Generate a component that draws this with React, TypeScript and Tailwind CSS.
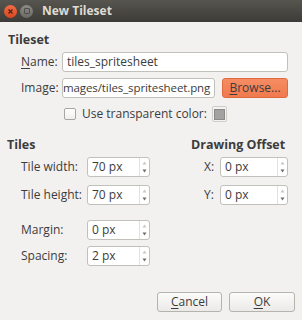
import React from "react";

const font = { fontFamily: '"Open Sans", "DejaVu Sans", sans-serif' };

function Spinner() {
  return (
    <div className="flex w-[10px] flex-col items-center justify-between border-l border-[#e3e1dd] py-[3px]">
      <svg width="5" height="4" viewBox="0 0 5 4">
        <path d="M2.5 0.5 L4.5 3.5 L0.5 3.5 Z" fill="#c9c7c2" />
      </svg>
      <svg width="5" height="4" viewBox="0 0 5 4">
        <path d="M0.5 0.5 L4.5 0.5 L2.5 3.5 Z" fill="#6e6c68" />
      </svg>
    </div>
  );
}

function SpinBox({ value, width }: { value: string; width: string }) {
  return (
    <div className={`flex h-[20px] ${width} rounded-[3px] border border-[#c2c0bb] bg-white`}>
      <div className="flex flex-1 items-center pl-[4px] text-[12px] text-[#3c3c3c]">{value}</div>
      <Spinner />
    </div>
  );
}

function Button({ children, className = "" }: { children: React.ReactNode; className?: string }) {
  return (
    <div
      className={`flex h-[20px] items-center justify-center rounded-[3px] border border-[#b5b3ae] bg-gradient-to-b from-[#fbfbfa] to-[#ebeae8] text-[12px] text-[#3c3c3c] ${className}`}
    >
      {children}
    </div>
  );
}

export default function App() {
  return (
    <div className="flex h-[320px] w-[302px] flex-col overflow-hidden bg-[#f2f1f0] text-[#3c3c3c]" style={font}>
      {/* Title bar */}
      <div className="flex h-[22px] items-center bg-gradient-to-b from-[#56554f] to-[#3c3b37]">
        <div className="ml-[4px] flex h-[13px] w-[13px] items-center justify-center rounded-full bg-gradient-to-b from-[#f26b45] to-[#d8471f]">
          <svg width="7" height="7" viewBox="0 0 7 7">
            <path d="M1.5 1.5 L5.5 5.5 M5.5 1.5 L1.5 5.5" stroke="#4a2315" strokeWidth="1.3" />
          </svg>
        </div>
        <div className="ml-[3px] flex h-[13px] w-[13px] items-center justify-center rounded-full bg-gradient-to-b from-[#8c8b86] to-[#6b6a65]">
          <div className="h-[6px] w-[6px] rounded-[1px] border border-[#4f4e4a]" />
        </div>
        <div className="ml-[9px] text-[12px] font-bold text-[#dfdbd2]">New Tileset</div>
      </div>

      {/* Tileset */}
      <div className="ml-[8px] mt-[10px] h-[16px] text-[12.5px] font-bold leading-[16px]">Tileset</div>
      <div className="mt-[4px] flex h-[20px] items-center pl-[21px]">
        <div className="w-[41px] text-[12px]">
          <span className="underline decoration-1 underline-offset-2">N</span>ame:
        </div>
        <div className="flex h-[20px] w-[226px] items-center rounded-[3px] border border-[#c2c0bb] bg-white pl-[4px] text-[12px]">
          tiles_spritesheet
        </div>
      </div>
      <div className="mt-[6px] flex h-[20px] items-center pl-[21px]">
        <div className="w-[41px] text-[12px]">Image:</div>
        <div className="flex h-[20px] w-[153px] items-center overflow-hidden whitespace-nowrap rounded-[3px] border border-[#c2c0bb] bg-white text-[11.5px] tracking-[-0.1px]">
          mages/tiles_spritesheet.png
        </div>
        <div className="ml-[7px] flex h-[20px] w-[66px] items-center justify-center rounded-[3px] border border-[#e0693f] bg-gradient-to-b from-[#f68c63] to-[#f07a4e] text-[12px] text-[#3c3c3c]">
          <span className="underline decoration-1 underline-offset-2">B</span>rowse...
        </div>
      </div>
      <div className="mt-[8px] flex h-[16px] items-center pl-[64px]">
        <div className="h-[12px] w-[12px] rounded-[2px] border border-[#a8a6a1] bg-gradient-to-b from-[#ffffff] to-[#f0efed]" />
        <div className="ml-[6px] text-[12px]">Use transparent color:</div>
        <div className="ml-[5px] flex h-[16px] w-[15px] items-center justify-center rounded-[2px] border border-[#cfcdc8] bg-[#f4f3f2]">
          <div className="h-[11px] w-[11px] border border-[#8b8a87] bg-[#a3a2a0]" />
        </div>
      </div>

      {/* Tiles / Drawing Offset */}
      <div className="mt-[15px] flex">
        <div className="flex w-[183px] flex-col">
          <div className="ml-[7px] h-[16px] text-[12.5px] font-bold leading-[16px]">Tiles</div>
          <div className="mt-[4px] flex h-[20px] items-center pl-[21px]">
            <div className="w-[66px] text-[12px]">Tile width:</div>
            <SpinBox value="70 px" width="w-[63px]" />
          </div>
          <div className="mt-[8px] flex h-[20px] items-center pl-[21px]">
            <div className="w-[66px] text-[12px]">Tile height:</div>
            <SpinBox value="70 px" width="w-[63px]" />
          </div>
          <div className="mt-[15px] flex h-[20px] items-center pl-[21px]">
            <div className="w-[66px] text-[12px]">Margin:</div>
            <SpinBox value="0 px" width="w-[63px]" />
          </div>
          <div className="mt-[6px] flex h-[20px] items-center pl-[21px]">
            <div className="w-[66px] text-[12px]">Spacing:</div>
            <SpinBox value="2 px" width="w-[63px]" />
          </div>
        </div>
        <div className="flex flex-col">
          <div className="ml-[8px] h-[16px] text-[12.5px] font-bold leading-[16px]">Drawing Offset</div>
          <div className="mt-[4px] flex h-[20px] items-center pl-[21px]">
            <div className="w-[16px] text-[12px]">X:</div>
            <SpinBox value="0 px" width="w-[68px]" />
          </div>
          <div className="mt-[8px] flex h-[20px] items-center pl-[21px]">
            <div className="w-[16px] text-[12px]">Y:</div>
            <SpinBox value="0 px" width="w-[68px]" />
          </div>
        </div>
      </div>

      {/* Buttons */}
      <div className="mt-auto mb-[8px] flex justify-end gap-[7px] pr-[7px]">
        <Button className="w-[65px]">
          <span className="underline decoration-1 underline-offset-2">C</span>ancel
        </Button>
        <Button className="w-[66px]">
          <span className="underline decoration-1 underline-offset-2">O</span>K
        </Button>
      </div>
    </div>
  );
}
